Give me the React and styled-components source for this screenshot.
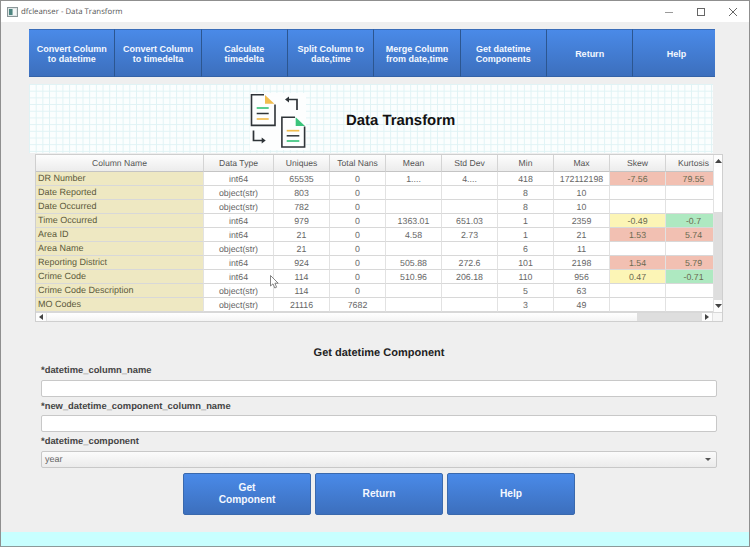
import React from "react"
import styled, { createGlobalStyle } from "styled-components"

const GlobalStyle = createGlobalStyle`
  html, body { margin: 0; padding: 0; background: #fff; }
  * { box-sizing: border-box; }
  body { text-rendering: geometricPrecision; }
`

const toolbarItems = [
  ["Convert Column", "to datetime"],
  ["Convert Column", "to timedelta"],
  ["Calculate", "timedelta"],
  ["Split Column to", "date,time"],
  ["Merge Column", "from date,time"],
  ["Get datetime", "Components"],
  ["Return"],
  ["Help"],
]

const columns = [
  ["Column Name", 168],
  ["Data Type", 70],
  ["Uniques", 56],
  ["Total Nans", 56],
  ["Mean", 56],
  ["Std Dev", 56],
  ["Min", 56],
  ["Max", 56],
  ["Skew", 56],
  ["Kurtosis", 56],
]

const rows = [
  ["DR Number", "int64", "65535", "0", "1....", "4....", "418", "172112198", ["-7.56", "red"], ["79.55", "red"]],
  ["Date Reported", "object(str)", "803", "0", "", "", "8", "10", "", ""],
  ["Date Occurred", "object(str)", "782", "0", "", "", "8", "10", "", ""],
  ["Time Occurred", "int64", "979", "0", "1363.01", "651.03", "1", "2359", ["-0.49", "yellow"], ["-0.7", "green"]],
  ["Area ID", "int64", "21", "0", "4.58", "2.73", "1", "21", ["1.53", "red"], ["5.74", "red"]],
  ["Area Name", "object(str)", "21", "0", "", "", "6", "11", "", ""],
  ["Reporting District", "int64", "924", "0", "505.88", "272.6", "101", "2198", ["1.54", "red"], ["5.79", "red"]],
  ["Crime Code", "int64", "114", "0", "510.96", "206.18", "110", "956", ["0.47", "yellow"], ["-0.71", "green"]],
  ["Crime Code Description", "object(str)", "114", "0", "", "", "5", "63", "", ""],
  ["MO Codes", "object(str)", "21116", "7682", "", "", "3", "49", "", ""],
]

const TransformIcon = () => (
  <svg width="56" height="57" viewBox="250 93 56 57" fill="none">
    <rect x="250" y="93" width="56" height="57" fill="#fdfefe" />
    <path d="M264 94.8H251.5V125.4H275V104.5" stroke="#2f3438" strokeWidth="1.6" />
    <path d="M265 95L274.4 103.8H265Z" fill="#f1bd4e" />
    <path d="M256.7 108H268.7" stroke="#3cc47c" strokeWidth="1.7" />
    <path d="M256.7 113.5H268.7" stroke="#2f3438" strokeWidth="1.5" />
    <path d="M256.7 119H268.7" stroke="#f1bd4e" strokeWidth="1.7" />
    <path d="M295 117.3H281.9V147H304.6V126.5" stroke="#2f3438" strokeWidth="1.6" />
    <path d="M295.7 117.3L305 126H295.7Z" fill="#3cc47c" />
    <path d="M286.7 130.7H299.3" stroke="#f1bd4e" strokeWidth="1.7" />
    <path d="M286.7 135.8H299.3" stroke="#2f3438" strokeWidth="1.5" />
    <path d="M286.7 141H299.3" stroke="#3cc47c" strokeWidth="1.7" />
    <path d="M288 99.5H297V110" stroke="#2f3438" strokeWidth="1.7" />
    <path d="M285 99.5L289 96.5V102.5Z" fill="#2f3438" />
    <path d="M253.5 130.5V140.5H262" stroke="#2f3438" strokeWidth="1.7" />
    <path d="M265.7 140.5L261.7 137.5V143.5Z" fill="#2f3438" />
  </svg>
)

const App = () => (
  <>
    <GlobalStyle />
    <Frame>
      <TitleBar>
        <AppIcon>
          <svg width="11" height="10" viewBox="0 0 11 10">
            <rect x="0.5" y="0.5" width="10" height="9" fill="#dfe6e6" stroke="#8a9698" />
            <rect x="2" y="2" width="3.5" height="6" fill="#4d8580" />
            <rect x="6" y="2" width="3" height="6" fill="#f4f7f7" />
          </svg>
        </AppIcon>
        <WindowTitle>dfcleanser - Data Transform</WindowTitle>
        <WindowControls>
          <svg width="10" height="10" viewBox="0 0 10 10">
            <path d="M1 5.5H9" stroke="#9a9a9a" />
          </svg>
          <svg width="10" height="10" viewBox="0 0 10 10">
            <rect x="1.5" y="1.5" width="7" height="7" fill="none" stroke="#666" />
          </svg>
          <svg width="10" height="10" viewBox="0 0 10 10">
            <path d="M1 1L9 9M9 1L1 9" stroke="#666" />
          </svg>
        </WindowControls>
      </TitleBar>

      <Content>
        <Toolbar>
          {toolbarItems.map((lines) => (
            <ToolButton key={lines.join()}>
              {lines.map((line) => (
                <span key={line}>{line}</span>
              ))}
            </ToolButton>
          ))}
        </Toolbar>

        <Banner>
          <TransformIcon />
          <BannerTitle>Data Transform</BannerTitle>
        </Banner>

        <TablePanel>
          <TableBody>
            <TableClip>
              <Grid>
                <colgroup>
                  {columns.map(([name, width]) => (
                    <col key={name} style={{ width }} />
                  ))}
                </colgroup>
                <thead>
                  <tr>
                    {columns.map(([name]) => (
                      <HeadCell key={name}>{name}</HeadCell>
                    ))}
                  </tr>
                </thead>
                <tbody>
                  {rows.map(([name, ...cells]) => (
                    <tr key={name}>
                      <NameCell>{name}</NameCell>
                      {cells.map((cell, i) =>
                        Array.isArray(cell) ? (
                          <DataCell key={i} $tone={cell[1]}>{cell[0]}</DataCell>
                        ) : (
                          <DataCell key={i}>{cell}</DataCell>
                        )
                      )}
                    </tr>
                  ))}
                </tbody>
              </Grid>
            </TableClip>
            <VScroll>
              <ScrollArrow $h={12}>
                <svg width="7" height="4" viewBox="0 0 7 4"><path d="M3.5 0L7 4H0Z" fill="#444" /></svg>
              </ScrollArrow>
              <VThumb />
              <VTrack />
              <ScrollArrow $h={12}>
                <svg width="7" height="4" viewBox="0 0 7 4"><path d="M3.5 4L7 0H0Z" fill="#444" /></svg>
              </ScrollArrow>
            </VScroll>
          </TableBody>
          <HScroll>
            <ScrollArrow $w={10}>
              <svg width="4" height="6" viewBox="0 0 4 6"><path d="M0 3L4 0V6Z" fill="#444" /></svg>
            </ScrollArrow>
            <HThumb />
            <HTrack />
            <ScrollArrow $w={10}>
              <svg width="4" height="6" viewBox="0 0 4 6"><path d="M4 3L0 0V6Z" fill="#444" /></svg>
            </ScrollArrow>
            <ScrollCorner />
          </HScroll>
          <Pointer width="9" height="14" viewBox="0 0 9 14">
            <path d="M0.5 0.5V11L3 8.8L4.8 13L6.6 12.2L4.9 8.2H8.2Z" fill="#fff" stroke="#666" strokeWidth="0.8" />
          </Pointer>
        </TablePanel>

        <Form>
          <FormTitle>Get datetime Component</FormTitle>
          <Field>
            <FieldLabel>*datetime_column_name</FieldLabel>
            <TextInput type="text" />
          </Field>
          <Field>
            <FieldLabel>*new_datetime_component_column_name</FieldLabel>
            <TextInput type="text" />
          </Field>
          <Field>
            <FieldLabel>*datetime_component</FieldLabel>
            <SelectBox>
              year
              <svg width="6" height="3" viewBox="0 0 6 3"><path d="M0 0H6L3 3Z" fill="#555" /></svg>
            </SelectBox>
          </Field>
          <FormActions>
            <ActionButton>
              <span>Get</span>
              <span>Component</span>
            </ActionButton>
            <ActionButton>Return</ActionButton>
            <ActionButton>Help</ActionButton>
          </FormActions>
        </Form>
      </Content>

      <StatusStrip />
    </Frame>
  </>
)

const Frame = styled.div`
  width: 750px;
  height: 547px;
  display: flex;
  flex-direction: column;
  border-top: 1px solid #8f8f8f;
  border-left: 1px solid #8f8f8f;
  border-right: 1px solid #8f8f8f;
  border-bottom: 1px solid #8c9a9a;
  background: #efefef;
  overflow: hidden;
`

const TitleBar = styled.div`
  height: 21px;
  flex: none;
  display: flex;
  align-items: center;
  padding-left: 6px;
  background: #fff;
`

const AppIcon = styled.span`
  display: flex;
  width: 14px;
`

const WindowTitle = styled.span`
  font: 7.8px/12px "Open Sans", "Liberation Sans", sans-serif;
  color: #555;
`

const WindowControls = styled.div`
  margin-left: auto;
  margin-right: 11px;
  display: flex;
  gap: 22px;
`

const Content = styled.div`
  flex: 1;
  padding: 7px 0 0 28px;
  font-family: "Liberation Sans", Arial, sans-serif;
`

const Toolbar = styled.div`
  width: 686px;
  height: 48px;
  display: grid;
  grid-template-columns: repeat(8, 86.33px);
  overflow: hidden;
`

const blueButton = `
  display: flex;
  flex-direction: column;
  align-items: center;
  justify-content: center;
  background: linear-gradient(#4a8ae8, #3c6fbd);
  color: #f4f8ff;
  font-family: "Liberation Sans", Arial, sans-serif;
  font-weight: bold;
`

const ToolButton = styled.button`
  ${blueButton}
  padding: 1px 0 0;
  border: 0;
  border-right: 1px solid #2c5690;
  border-top: 1px solid #3a6db8;
  border-bottom: 1px solid #3463a8;
  font-size: 9px;
  line-height: 10px;

  &:last-child {
    border-right: 0;
  }
`

const Banner = styled.div`
  width: 684px;
  height: 69px;
  margin-top: 7px;
  padding: 9px 0 0 221px;
  display: flex;
  align-items: flex-start;
  gap: 40px;
  background-color: #fbfefe;
  background-image:
    linear-gradient(#e0f3f5 1px, transparent 1px),
    linear-gradient(90deg, #e0f3f5 1px, transparent 1px);
  background-size: 6.7px 6.7px;
`

const BannerTitle = styled.h1`
  margin: 18px 0 0;
  font-size: 14.9px;
  line-height: 20px;
  font-weight: bold;
  color: #111;
`

const TablePanel = styled.div`
  position: relative;
  width: 688px;
  height: 168px;
  margin: 1px 0 0 6px;
  border: 1px solid #cfcfcf;
  background: #fff;
  display: flex;
  flex-direction: column;
`

const TableBody = styled.div`
  display: flex;
  height: 157px;
`

const TableClip = styled.div`
  width: 677px;
  flex: none;
  overflow: hidden;
`

const Grid = styled.table`
  width: 686px;
  table-layout: fixed;
  border-collapse: separate;
  border-spacing: 0;
  font-size: 8.8px;
  color: #666;
`

const HeadCell = styled.th`
  height: 17px;
  padding: 0 0 1px;
  font-size: 8.6px;
  font-weight: normal;
  text-align: center;
  color: #555;
  white-space: nowrap;
  background: linear-gradient(#fdfdfd, #ececec);
  border-right: 1px solid #d4d4d4;
  border-bottom: 1px solid #c4c4c4;
`

const toneColors = {
  red: "#f2c0b2",
  yellow: "#fcf5b6",
  green: "#aee9c1",
}

const DataCell = styled.td`
  height: 14px;
  padding: 0;
  text-align: center;
  line-height: 12px;
  white-space: nowrap;
  overflow: hidden;
  background: ${(p) => toneColors[p.$tone] || "#fff"};
  color: ${(p) => (p.$tone ? "#6a6a50" : "#666")};
  border-right: 1px solid #e2e2e2;
  border-bottom: 1px solid #d8d8d8;
`

const NameCell = styled(DataCell)`
  padding: 0 0 1px 2px;
  font-size: 9px;
  line-height: 12px;
  text-align: left;
  background: #eee8c2;
  color: #5c5a3c;
`

const VScroll = styled.div`
  width: 9px;
  flex: none;
  display: flex;
  flex-direction: column;
  border-left: 1px solid #e2e2e2;
`

const ScrollArrow = styled.div`
  flex: none;
  width: ${(p) => (p.$w ? `${p.$w}px` : "auto")};
  height: ${(p) => (p.$h ? `${p.$h}px` : "auto")};
  display: flex;
  align-items: center;
  justify-content: center;
  background: #fdfdfd;
`

const VThumb = styled.div`
  height: 45px;
  flex: none;
  background: #fff;
`

const VTrack = styled.div`
  flex: 1;
  background: #dedede;
`

const HScroll = styled.div`
  height: 9px;
  flex: none;
  display: flex;
  border-top: 1px solid #d8d8d8;
`

const HThumb = styled.div`
  width: 591px;
  flex: none;
  background: linear-gradient(#fff, #f4f4f4);
  border-left: 1px solid #e2e2e2;
`

const HTrack = styled.div`
  flex: 1;
  background: #dedede;
`

const ScrollCorner = styled.div`
  width: 10px;
  flex: none;
  background: #f6f6f6;
  border-left: 1px solid #e2e2e2;
`

const Pointer = styled.svg`
  position: absolute;
  left: 234px;
  top: 120px;
`

const Form = styled.div`
  width: 676px;
  margin: 25px 0 0 12px;
  display: flex;
  flex-direction: column;
`

const FormTitle = styled.h2`
  margin: 0 0 4px;
  font-size: 11px;
  line-height: 13px;
  font-weight: bold;
  text-align: center;
  color: #222;
`

const Field = styled.div`
  display: flex;
  flex-direction: column;
  margin-bottom: 3px;
`

const FieldLabel = styled.label`
  font-size: 9.4px;
  line-height: 12px;
  height: 15.5px;
  font-weight: bold;
  color: #444;
`

const TextInput = styled.input`
  display: block;
  width: 100%;
  height: 17px;
  padding: 0 3px;
  background: #fff;
  border: 1px solid #c8c8c8;
  border-radius: 2px;
  outline: none;
`

const SelectBox = styled.div`
  height: 17px;
  padding: 0 3px;
  display: flex;
  align-items: center;
  justify-content: space-between;
  font-size: 9px;
  color: #666;
  background: linear-gradient(#fbfbfb, #ebebeb);
  border: 1px solid #c8c8c8;
  border-radius: 2px;

  svg {
    margin-right: 2px;
  }
`

const FormActions = styled.div`
  margin: 2px 0 0 142px;
  display: flex;
  gap: 4px;
`

const ActionButton = styled.button`
  ${blueButton}
  width: 128px;
  height: 42px;
  padding: 1px 0 0;
  border: 1px solid #3a69ad;
  border-radius: 2px;
  font-size: 10.2px;
  line-height: 12px;
`

const StatusStrip = styled.div`
  height: 14px;
  flex: none;
  background: #c8ffff;
`

export default App
